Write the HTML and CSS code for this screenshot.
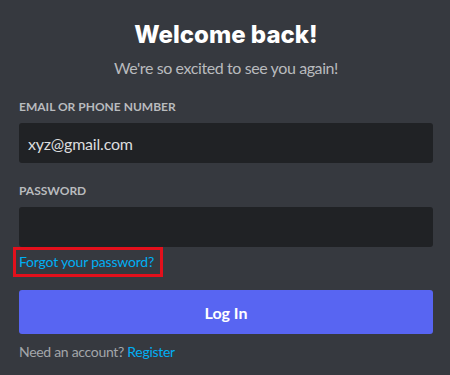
FILE: index.html
```html
<!DOCTYPE html>
<html lang="en">
<head>
<meta charset="utf-8">
<title>Login</title>
<link rel="stylesheet" href="styles.css">
</head>
<body>
<main class="auth">
  <h1 class="title">Welcome back!</h1>
  <p class="subtitle">We're so excited to see you again!</p>
  <form class="form">
    <label class="label" for="email">Email or Phone Number</label>
    <div class="input"><span class="input-text" id="email">xyz@gmail.com</span></div>
    <label class="label label-gap" for="password">Password</label>
    <div class="input" id="password"></div>
    <div class="forgot-row"><a class="forgot" href="#">Forgot your password?</a></div>
    <button class="btn" type="button">Log In</button>
    <p class="register">Need an account? <a class="link" href="#">Register</a></p>
  </form>
</main>
</body>
</html>
```
FILE: styles.css
```css
html, body {
  margin: 0;
  padding: 0;
  background: #36393f;
}
body {
  font-family: Lato, "Noto Sans", sans-serif;
  width: 450px;
  height: 375px;
  overflow: hidden;
}
.auth {
  padding: 20px 17px 0 19px;
}
.title {
  margin: 0;
  font-family: Inter, Lato, sans-serif;
  font-weight: 800;
  font-size: 24px;
  line-height: 30px;
  color: #ffffff;
  text-align: center;
}
.subtitle {
  margin: 8px 0 0;
  font-size: 16px;
  line-height: 20px;
  letter-spacing: -0.4px;
  color: #b9bbbe;
  text-align: center;
}
.form {
  display: flex;
  flex-direction: column;
  margin-top: 21px;
}
.label {
  display: block;
  font-size: 12px;
  line-height: 16px;
  font-weight: 700;
  text-transform: uppercase;
  color: #b9bbbe;
  margin-bottom: 8px;
}
.label-gap {
  margin-top: 20px;
}
.input {
  height: 40px;
  background: #202225;
  border-radius: 3px;
  display: flex;
  align-items: center;
  padding: 0 9px;
}
.input-text {
  font-size: 16px;
  letter-spacing: -0.2px;
  color: #dcddde;
}
.forgot-row {
  display: flex;
}
.forgot {
  display: inline-block;
  margin-left: -6px;
  border: 3px solid #e3101c;
  padding: 4px 6px 4px 3px;
  font-size: 14px;
  line-height: 16px;
  letter-spacing: -0.2px;
  color: #00aff4;
  text-decoration: none;
}
.btn {
  margin-top: 13px;
  height: 44px;
  border: 0;
  border-radius: 3px;
  background: #5865f2;
  color: #ffffff;
  font-family: Lato, "Noto Sans", sans-serif;
  font-size: 16px;
  font-weight: 700;
  cursor: pointer;
}
.register {
  margin: 10px 0 0;
  font-size: 14px;
  line-height: 16px;
  letter-spacing: -0.3px;
  color: #a3a6aa;
}
.link {
  color: #00aff4;
  text-decoration: none;
}
```
